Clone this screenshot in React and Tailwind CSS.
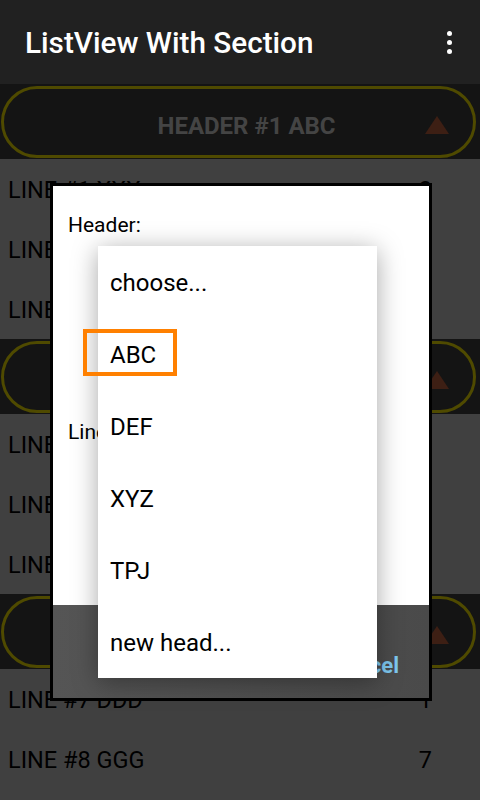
import React from "react";

const font = { fontFamily: "Roboto, 'Noto Sans', sans-serif" };

function Header({ label }) {
  return (
    <div className="h-[75px] bg-[#141414] pt-[2px] pb-[1px] pl-[1px] pr-[4px] flex">
      <div className="flex-1 rounded-[36px] border-[3px] border-[#4f4a00] flex items-center relative">
        <div className="flex-1 text-center text-[24px] font-bold text-[#444444] pl-[16px] pt-[8px]">{label}</div>
        <svg className="absolute right-[24px] top-[27px]" width="24" height="18" viewBox="0 0 24 18">
          <polygon points="12,0 24,18 0,18" fill="#3d1f14" />
        </svg>
      </div>
    </div>
  );
}

function Row({ label, value }) {
  return (
    <div className="h-[60px] bg-[#404040] flex items-center pl-[8px] pr-[48px] text-[23.5px] text-black pt-[3px]">
      <div className="flex-1">{label}</div>
      <div>{value}</div>
    </div>
  );
}

export default function App() {
  const items = ["choose...", "ABC", "DEF", "XYZ", "TPJ", "new head..."];
  return (
    <div className="w-[480px] h-[800px] overflow-hidden relative bg-[#404040]" style={font}>
      <div className="h-[84px] bg-[#212121] flex items-center pl-[25px] pr-[28px]">
        <div className="flex-1 text-white text-[29.7px] font-medium pt-[2px]">ListView With Section</div>
        <div className="flex flex-col gap-[4px] items-center">
          <div className="w-[5px] h-[5px] rounded-full bg-white" />
          <div className="w-[5px] h-[5px] rounded-full bg-white" />
          <div className="w-[5px] h-[5px] rounded-full bg-white" />
        </div>
      </div>
      <Header label="HEADER #1 ABC" />
      <Row label="LINE #1 XXX" value="2" />
      <Row label="LINE #2 YYY" value="5" />
      <Row label="LINE #3 ZZZ" value="3" />
      <Header label="HEADER #2 DEF" />
      <Row label="LINE #4 AAA" value="1" />
      <Row label="LINE #5 BBB" value="3" />
      <Row label="LINE #6 CCC" value="0" />
      <Header label="HEADER #3 XYZ" />
      <Row label="LINE #7 DDD" value="1" />
      <Row label="LINE #8 GGG" value="7" />

      {/* Dialog */}
      <div className="absolute left-[50px] top-[183px] w-[382px] h-[518px] border-[3px] border-black bg-white flex flex-col">
        <div className="flex-1 bg-white pl-[15px] pt-[24px] text-[21px] text-black flex flex-col">
          <div className="h-[30px] leading-[30px]">Header:</div>
          <div className="mt-[177px] h-[30px] leading-[30px]">Line:</div>
        </div>
        <div className="h-[93px] bg-gradient-to-r from-[#555555] to-[#4a4a4a] flex items-center justify-end pr-[30px] pt-[28px]">
          <div className="text-[22px] font-bold text-[#7ec8f0]">Cancel</div>
        </div>
      </div>

      {/* Dropdown */}
      <div className="absolute left-[98px] top-[246px] w-[279px] h-[432px] bg-white shadow-[0_4px_24px_rgba(0,0,0,0.35)] flex flex-col">
        {items.map((it) => (
          <div key={it} className="h-[72px] flex items-center pl-[12px] pt-[2px] text-[24px] text-black">
            {it}
          </div>
        ))}
      </div>

      {/* Orange highlight */}
      <div className="absolute left-[83px] top-[329px] w-[94px] h-[47px] border-[4px] border-[#ff8000]" />
    </div>
  );
}
